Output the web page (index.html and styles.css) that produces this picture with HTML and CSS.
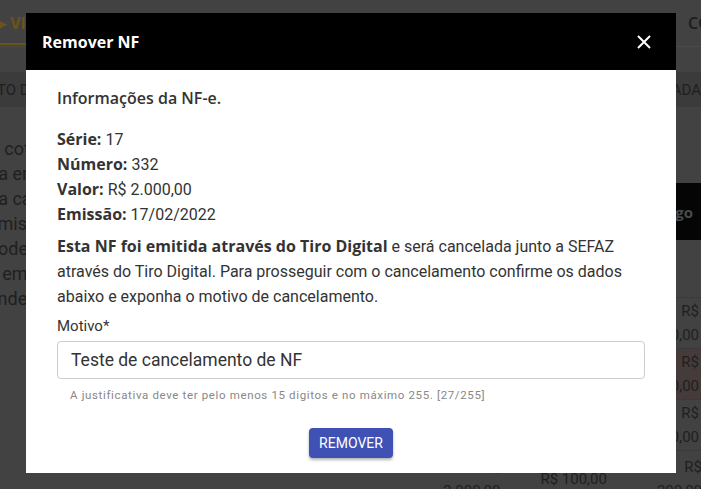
FILE: index.html
```html
<!DOCTYPE html>
<html lang="pt-BR">
<head>
  <meta charset="utf-8" />
  <meta name="viewport" content="width=device-width, initial-scale=1" />
  <title>Remover NF</title>
  <link rel="stylesheet" href="styles.css">
</head>
<body>
  <!-- page behind the dialog (already dimmed) -->
  <div class="app">
    <nav class="tabs">
      <span class="tab active">&#9654; VISÃO GERAL</span>
      <span class="tab right">COMPRAS</span>
    </nav>
    <div class="band">
      <span>TO DA NOTA</span>
      <span>CANCELADA</span>
    </div>
    <div class="content">
      <div class="notes">
        <p>A cotação</p>
        <p>da emitida e</p>
        <p>da cancelada</p>
        <p>emissão</p>
        <p>poderá</p>
        <p>a emissão</p>
        <p>endente</p>
      </div>
      <div class="table">
        <div class="thead"><span>Código</span></div>
        <div class="trow"><span>R$<br>1.000,00</span></div>
        <div class="trow warn"><span>R$<br>200,00</span></div>
        <div class="trow"><span>R$<br>300,00</span></div>
        <div class="trow last">
          <span class="c1">R$<br>2.000,00</span>
          <span class="c2">R$ 100,00</span>
          <span class="c3">R$<br>200,00</span>
        </div>
      </div>
    </div>
  </div>

  <div class="modal">
    <div class="modal-head">
      <h2>Remover NF</h2>
      <button class="close" aria-label="Fechar">
        <svg width="14" height="14" viewBox="0 0 14 14"><path d="M1 1L13 13M13 1L1 13" stroke="#fff" stroke-width="2" /></svg>
      </button>
    </div>
    <div class="modal-body">
      <h3>Informações da NF-e.</h3>
      <div class="info">
        <div><b>Série:</b> 17</div>
        <div><b>Número:</b> 332</div>
        <div><b>Valor:</b> R$ 2.000,00</div>
        <div><b>Emissão:</b> 17/02/2022</div>
      </div>
      <p class="desc"><b>Esta NF foi emitida através do Tiro Digital</b> e será cancelada junto a SEFAZ através do Tiro Digital. Para prosseguir com o cancelamento confirme os dados abaixo e exponha o motivo de cancelamento.</p>
      <label for="motivo">Motivo*</label>
      <input type="text" id="motivo" value="Teste de cancelamento de NF" />
      <div class="hint">A justificativa deve ter pelo menos 15 digitos e no máximo 255. [27/255]</div>
      <div class="actions">
        <button class="primary">Remover</button>
      </div>
    </div>
  </div>
</body>
</html>
```

FILE: styles.css
```css
body { margin: 0; background: #424242; font-family: Roboto, "Liberation Sans", sans-serif; overflow: hidden; }

.app { width: 701px; height: 489px; color: #1f1f1f; overflow: hidden; }
.tabs { display: flex; justify-content: space-between; height: 47px; border-bottom: 1px solid #4a4a4a; box-sizing: border-box; padding-top: 12px; }
.tab { font-family: "Open Sans", sans-serif; font-weight: 700; font-size: 16px; line-height: 22px; padding: 0 6px; white-space: nowrap; }
.tab.active { color: #6b5418; border-bottom: 2px solid #6b5418; margin-left: -12px; height: 33px; box-sizing: border-box; }
.tab.right { margin-right: -70px; color: #1c1c1c; font-weight: 600; }
.band { display: flex; justify-content: space-between; background: #3b3b3b; height: 35px; margin-top: 25px; align-items: center; font-size: 15px; white-space: nowrap; }
.band span:first-child { margin-left: -3px; }

.content { display: flex; justify-content: space-between; }
.notes { padding-top: 29px; margin-left: -12px; white-space: nowrap; }
.notes p { margin: 0; font-size: 18px; line-height: 25px; }
.table { width: 280px; margin-top: 76px; font-size: 15px; line-height: 24px; }
.thead { background: #050505; height: 57px; display: flex; align-items: center; justify-content: flex-end; padding-right: 8px; font-family: "Open Sans", sans-serif; font-weight: 700; color: #4a4a4a; }
.trow { height: 50px; border-top: 1px solid #3a3a3a; display: flex; justify-content: flex-end; align-items: center; padding-right: 2px; text-align: right; }
.thead + .trow { margin-top: 57px; }
.trow.warn { background: #453b3a; }
.trow.last { gap: 40px; align-items: flex-start; padding-top: 4px; margin-right: -3px; }
.trow.last .c2 { margin-top: 12px; margin-right: 10px; }

.modal { position: absolute; left: 26px; top: 13px; width: 650px; background: #fff; }
.modal-head { background: #000; height: 57px; display: flex; align-items: center; justify-content: space-between; padding: 0 21px 0 16px; }
.modal-head h2 { margin: 0; color: #fff; font-family: "Open Sans", sans-serif; font-weight: 700; font-size: 16px; }
.close { background: none; border: 0; padding: 4px; cursor: pointer; display: flex; }
.modal-body { padding: 16px 31px 15px; color: #333; font-size: 16px; line-height: 25px; }
.modal-body h3 { margin: 0 0 16px; font-family: "Open Sans", sans-serif; font-weight: 600; font-size: 16px; line-height: 25px; }
.modal-body b { font-family: "Open Sans", sans-serif; font-weight: 700; }
.info { margin-bottom: 7px; }
.desc { margin: 0 0 5px; }
label { display: block; color: #333; font-size: 15px; margin-bottom: 2px; }
input { display: block; width: 100%; box-sizing: border-box; height: 38px; padding: 0 13px; border: 1px solid #ccc; border-radius: 4px; font-family: inherit; font-size: 17.5px; color: #333; }
.hint { margin: 8px 0 0 13px; font-size: 11.5px; line-height: 16px; letter-spacing: 0.64px; color: #888; }
.actions { display: flex; justify-content: center; margin-top: 25px; }
button.primary { background: #3f51b5; color: #fff; border: 0; border-radius: 4px; height: 30px; padding: 0 10px; font-family: Roboto, sans-serif; font-size: 14px; text-transform: uppercase; box-shadow: 0 2px 3px rgba(0,0,0,0.3); cursor: pointer; }
```
